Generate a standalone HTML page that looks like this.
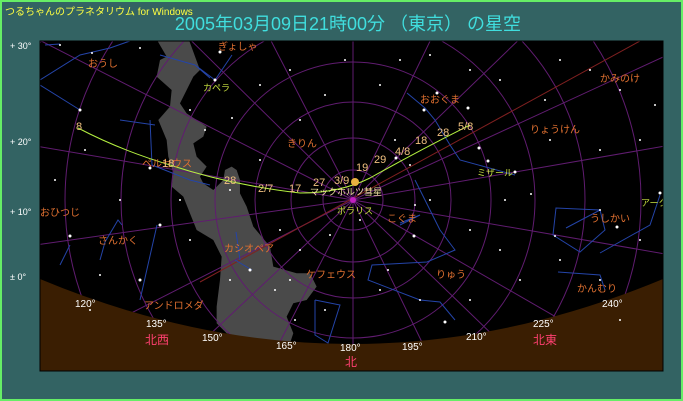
<!DOCTYPE html>
<html><head><meta charset="utf-8"><style>
html,body{margin:0;padding:0;width:683px;height:401px;overflow:hidden;background:#336363;}
svg{position:absolute;left:0;top:0}
text{font-family:"Liberation Sans","Noto Sans CJK JP",sans-serif;}
</style></head><body>
<svg width="683" height="401" viewBox="0 0 683 401">
<rect x="1" y="1" width="681" height="399" fill="#336363" stroke="#66ee66" stroke-width="2"/>
<text x="5" y="15" font-size="10" fill="#ffff40">つるちゃんのプラネタリウム for Windows</text>
<text x="348" y="30" font-size="18" fill="#40dede" text-anchor="middle" font-family="Liberation Sans, Noto Sans CJK JP, sans-serif">2005年03月09日21時00分 （東京） の星空</text>
<g font-size="9" fill="#fff">
<text x="10" y="49">+ 30°</text><text x="10" y="145">+ 20°</text><text x="10" y="215">+ 10°</text><text x="10" y="280">± 0°</text>
</g>
<defs><clipPath id="c"><rect x="40" y="41" width="623" height="330"/></clipPath></defs>
<rect x="40" y="41" width="623" height="330" fill="#000"/>
<g clip-path="url(#c)">
<g transform="translate(40,40) scale(0.3333)" fill="#4a4a4a">
<path d="M351,0 L447,0 L480,90 L460,110 L440,150 L420,190 L440,220 L470,240 L500,260 L490,290 L460,310 L470,350 L500,380 L480,410 L490,430 L520,450 L550,420 L555,390 L575,380 L590,390 L600,420 L600,460 L620,500 L640,560 L690,620 L700,680 L770,700 L810,700 L830,740 L800,780 L760,790 L740,830 L760,880 L750,910 L640,900 L560,880 L530,850 L530,800 L540,720 L545,650 L520,600 L470,570 L450,520 L430,470 L395,440 L400,400 L385,350 L380,300 L355,240 L390,200 L395,150 L350,110 L360,60 L380,50 Z"/>
</g>
<g fill="none" stroke="#601c70" stroke-width="1">
<circle cx="353" cy="200" r="30"/><circle cx="353" cy="200" r="62"/><circle cx="353" cy="200" r="98"/><circle cx="353" cy="200" r="138"/><circle cx="353" cy="200" r="182"/><circle cx="353" cy="200" r="232"/><circle cx="353" cy="200" r="288"/><circle cx="353" cy="200" r="350"/>
<path d="M353,200 L353,0 M353,200 L450,0 M353,200 L560,0 M353,200 L700,40 M353,200 L700,140 M353,200 L700,260 M353,200 L700,400 M353,200 L560,400 M353,200 L450,400 M353,200 L353,400 M353,200 L250,400 M353,200 L140,400 M353,200 L0,380 M353,200 L0,250 M353,200 L0,140 M353,200 L0,20 M353,200 L150,0 M353,200 L250,0"/>
</g>
<path d="M640,41 L200,282" stroke="#802020" stroke-width="1"/>
<g fill="none" stroke="#2444a8" stroke-width="1">
<path d="M40,80 L80,55 L110,48 L130,41 M45,45 L60,44"/>
<path d="M160,55 L195,65 L215,80 L232,55 M195,65 L210,78"/>
<path d="M40,85 L80,110 M120,120 L155,125 M150,120 L152,165 M152,165 L190,180 L210,185"/>
<path d="M105,242 L118,220 L122,225 M105,242 L100,260"/>
<path d="M70,245 L60,265 M157,225 L140,300"/>
<path d="M235,260 L252,270 M236,232 L240,260"/>
<path d="M315,300 L315,335 L328,343 L340,305 L315,300"/>
<path d="M407,93 L425,108 L435,120 L450,145 L460,160 L515,175"/>
<path d="M415,180 L440,230 L455,250 L427,262 L372,265 L368,280 L420,300 L440,302 L455,320 M400,225 L420,215 L400,223"/>
<path d="M566,228 L600,210 L605,230 L580,252 L553,235 L556,208 L600,210"/>
<path d="M660,195 L650,225 L600,253 M558,272 L600,275 L605,290"/>
</g>
<path d="M40,279 Q351,409 663,279 L663,371 L40,371 Z" fill="#3a1e02"/>
<path d="M78,128 Q120,150 170,165 Q230,185 300,193 Q340,193 370,178 Q420,150 470,125" fill="none" stroke="#b4f040" stroke-width="1"/>
<circle cx="355" cy="182" r="4" fill="#e8b040"/>
<circle cx="353" cy="200" r="3" fill="#c020c0"/>
<g fill="#fff">
<circle cx="60" cy="45" r="1"/><circle cx="92" cy="53" r="1"/><circle cx="140" cy="48" r="1"/><circle cx="220" cy="52" r="1.5"/><circle cx="215" cy="80" r="1.5"/><circle cx="80" cy="110" r="1.5"/><circle cx="150" cy="168" r="1.5"/><circle cx="190" cy="110" r="1"/><circle cx="205" cy="130" r="1"/><circle cx="232" cy="118" r="1"/><circle cx="260" cy="85" r="1"/><circle cx="290" cy="70" r="1"/><circle cx="300" cy="120" r="1"/><circle cx="325" cy="95" r="1"/><circle cx="345" cy="60" r="1"/><circle cx="380" cy="85" r="1"/><circle cx="400" cy="60" r="1"/><circle cx="430" cy="55" r="1"/><circle cx="470" cy="70" r="1"/><circle cx="500" cy="80" r="1"/><circle cx="560" cy="60" r="1"/><circle cx="590" cy="70" r="1"/><circle cx="620" cy="90" r="1"/><circle cx="655" cy="105" r="1"/><circle cx="437" cy="93" r="1.5"/><circle cx="424" cy="110" r="1.5"/><circle cx="468" cy="108" r="1.5"/><circle cx="479" cy="148" r="1.5"/><circle cx="488" cy="161" r="1.5"/><circle cx="515" cy="172" r="1.5"/><circle cx="660" cy="193" r="1.5"/><circle cx="617" cy="227" r="1.5"/><circle cx="555" cy="236" r="1"/><circle cx="600" cy="210" r="1"/><circle cx="531" cy="194" r="1"/><circle cx="505" cy="200" r="1"/><circle cx="415" cy="205" r="1"/><circle cx="414" cy="236" r="1.5"/><circle cx="430" cy="200" r="1"/><circle cx="470" cy="230" r="1"/><circle cx="500" cy="250" r="1"/><circle cx="560" cy="260" r="1"/><circle cx="600" cy="280" r="1"/><circle cx="640" cy="240" r="1"/><circle cx="388" cy="270" r="1"/><circle cx="445" cy="322" r="1.5"/><circle cx="420" cy="300" r="1"/><circle cx="470" cy="300" r="1"/><circle cx="520" cy="280" r="1"/><circle cx="230" cy="280" r="1"/><circle cx="250" cy="270" r="1.5"/><circle cx="275" cy="290" r="1"/><circle cx="295" cy="320" r="1"/><circle cx="325" cy="310" r="1"/><circle cx="290" cy="280" r="1"/><circle cx="160" cy="225" r="1.5"/><circle cx="70" cy="236" r="1.5"/><circle cx="100" cy="275" r="1"/><circle cx="140" cy="280" r="1.5"/><circle cx="190" cy="240" r="1"/><circle cx="180" cy="200" r="1"/><circle cx="230" cy="190" r="1"/><circle cx="260" cy="160" r="1"/><circle cx="280" cy="230" r="1"/><circle cx="300" cy="250" r="1"/><circle cx="330" cy="235" r="1"/><circle cx="360" cy="220" r="1"/><circle cx="55" cy="180" r="1"/><circle cx="85" cy="150" r="1"/><circle cx="120" cy="200" r="1"/><circle cx="90" cy="310" r="1"/><circle cx="620" cy="320" r="1"/><circle cx="600" cy="150" r="1"/><circle cx="640" cy="140" r="1"/><circle cx="550" cy="140" r="1"/><circle cx="545" cy="100" r="1"/><circle cx="396" cy="158" r="1.5"/><circle cx="410" cy="165" r="1"/><circle cx="395" cy="140" r="1"/><circle cx="380" cy="290" r="1"/>
</g>
<g font-size="10" fill="#e07030">
<text x="88" y="67">おうし</text><text x="218" y="50">ぎょしゃ</text><text x="287" y="147">きりん</text><text x="420" y="103">おおぐま</text><text x="600" y="82">かみのけ</text><text x="530" y="133">りょうけん</text><text x="40" y="216">おひつじ</text><text x="98" y="244">さんかく</text><text x="224" y="252">カシオペア</text><text x="306" y="278">ケフェウス</text><text x="436" y="278">りゅう</text><text x="387" y="222">こぐま</text><text x="590" y="222">うしかい</text><text x="577" y="292">かんむり</text><text x="144" y="309">アンドロメダ</text><text x="142" y="167">ペルセウス</text>
</g>
<g font-size="9" fill="#c8e040">
<text x="203" y="91">カペラ</text><text x="477" y="176">ミザール</text><text x="641" y="206">アークト</text><text x="337" y="214">ポラリス</text>
</g>
<text x="310" y="195" font-size="9" fill="#f0e0a0">マックホルツ彗星</text>
<g font-size="11" fill="#f0c080">
<text x="76" y="130">8</text><text x="162" y="167">18</text><text x="224" y="184">28</text><text x="258" y="192">2/7</text><text x="289" y="192">17</text><text x="313" y="186">27</text><text x="334" y="184">3/9</text><text x="356" y="171">19</text><text x="374" y="163">29</text><text x="395" y="155">4/8</text><text x="415" y="144">18</text><text x="437" y="136">28</text><text x="458" y="130">5/8</text>
</g>
<g font-size="10" fill="#fff">
<text x="75" y="307">120°</text><text x="146" y="327">135°</text><text x="202" y="341">150°</text><text x="276" y="349">165°</text><text x="340" y="351">180°</text><text x="402" y="350">195°</text><text x="466" y="340">210°</text><text x="533" y="327">225°</text><text x="602" y="307">240°</text>
</g>
<g font-size="12" fill="#ff4070">
<text x="145" y="344">北西</text><text x="533" y="344">北東</text><text x="345" y="366">北</text>
</g>
</g>
<rect x="40" y="41" width="623" height="330" fill="none" stroke="#000" stroke-width="1"/>
</svg>
</body></html>
